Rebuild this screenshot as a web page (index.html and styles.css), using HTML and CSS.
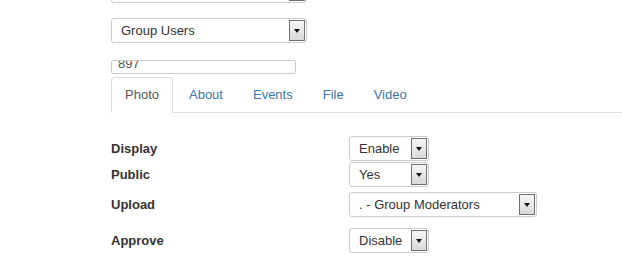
FILE: index.html
```html
<!DOCTYPE html>
<html lang="en">
<head>
<meta charset="UTF-8" />
<title>Group Settings</title>
<link rel="stylesheet" href="styles.css">
</head>
<body>
<main class="page">
  <div class="select sel-top">
    <span class="sel-text">&nbsp;</span>
    <span class="sel-arrow"></span>
  </div>

  <div class="select sel-group">
    <span class="sel-text">Group Users</span>
    <span class="sel-arrow"></span>
  </div>

  <div class="text-field"><span>897</span></div>

  <ul class="tabs">
    <li class="tab active">Photo</li>
    <li class="tab">About</li>
    <li class="tab">Events</li>
    <li class="tab">File</li>
    <li class="tab">Video</li>
  </ul>

  <div class="settings">
    <div class="row row-display">
      <label>Display</label>
      <div class="select sel-small">
        <span class="sel-text">Enable</span>
        <span class="sel-arrow"></span>
      </div>
    </div>
    <div class="row row-public">
      <label>Public</label>
      <div class="select sel-small">
        <span class="sel-text">Yes</span>
        <span class="sel-arrow"></span>
      </div>
    </div>
    <div class="row row-upload">
      <label>Upload</label>
      <div class="select sel-wide">
        <span class="sel-text">. - Group Moderators</span>
        <span class="sel-arrow"></span>
      </div>
    </div>
    <div class="row row-approve">
      <label>Approve</label>
      <div class="select sel-small">
        <span class="sel-text">Disable</span>
        <span class="sel-arrow"></span>
      </div>
    </div>
  </div>
</main>
</body>
</html>
```

FILE: styles.css
```css
body {
  margin: 0;
  background: #fff;
  font-family: "Liberation Sans", Arial, sans-serif;
  font-size: 13px;
  color: #333;
  overflow: hidden;
}
.page {
  padding-left: 111px;
}
.select {
  display: flex;
  align-items: center;
  box-sizing: border-box;
  height: 25px;
  border: 1px solid #ccc;
  border-radius: 3px;
  padding: 1px;
  background: #fff;
}
.sel-text {
  flex: 1;
  padding-left: 8px;
  white-space: nowrap;
  color: #333;
}
.sel-arrow {
  box-sizing: border-box;
  width: 16px;
  height: 100%;
  border: 1px solid #707070;
  background: linear-gradient(#f7f7f7, #d9d9d9);
  display: flex;
  align-items: center;
  justify-content: center;
}
.sel-arrow::after {
  content: "";
  border-left: 3.5px solid transparent;
  border-right: 3.5px solid transparent;
  border-top: 4px solid #111;
}
.sel-top {
  width: 196px;
  margin-top: -22px;
}
.sel-group {
  width: 196px;
  margin-top: 15px;
}
.text-field {
  box-sizing: border-box;
  width: 185px;
  height: 14px;
  margin-top: 17px;
  border: 1px solid #ccc;
  border-radius: 2px;
  overflow: hidden;
  padding-left: 6px;
  color: #555;
  line-height: 13px;
}
.text-field span {
  display: block;
  margin-top: -4px;
}
.tabs {
  list-style: none;
  margin: 3px 0 0;
  padding: 0;
  display: flex;
  border-bottom: 1px solid #ddd;
}
.tab {
  line-height: 34px;
  padding: 0 13px;
  margin-right: 2px;
  margin-bottom: -1px;
  border: 1px solid transparent;
  border-radius: 4px 4px 0 0;
  color: #3c76ab;
}
.tab.active {
  color: #555;
  background: #fff;
  border-color: #ddd;
  border-bottom-color: #fff;
}
.settings {
  margin-top: 23px;
}
.row {
  display: grid;
  grid-template-columns: 238px auto;
  align-items: center;
}
.row label {
  font-weight: bold;
  color: #333;
}
.row-public {
  margin-top: 1px;
}
.row-upload {
  margin-top: 5px;
}
.row-approve {
  margin-top: 11px;
}
.sel-small {
  width: 80px;
}
.sel-wide {
  width: 188px;
}
```
